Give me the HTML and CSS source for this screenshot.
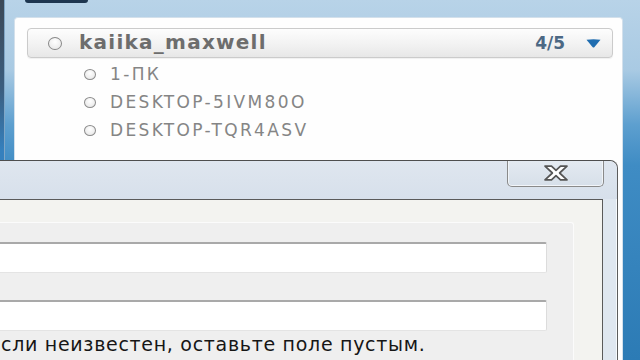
FILE: index.html
```html
<!DOCTYPE html>
<html lang="ru">
<head>
<meta charset="utf-8">
<title>Contacts</title>
<link rel="stylesheet" href="styles.css">
</head>
<body>
<div class="desk">
  <div class="leftstrip"></div>
  <div class="maincol">
    <div class="topbar"><div class="tab"></div></div>
    <div class="panel">
      <div class="group-head">
        <span class="dot big"></span>
        <span class="gname">kaiika_maxwell</span>
        <span class="count">4/5</span>
        <svg class="tri" width="15" height="9" viewBox="0 0 15 9"><path d="M0.5 0.8 Q7.5 -0.4 14.5 0.8 L8.3 8.2 Q7.5 9 6.7 8.2 Z" fill="#1f6db0"/></svg>
      </div>
      <ul class="items">
        <li><span class="dot"></span><span class="iname">1-ПК</span></li>
        <li><span class="dot"></span><span class="iname">DESKTOP-5IVM80O</span></li>
        <li><span class="dot"></span><span class="iname">DESKTOP-TQR4ASV</span></li>
      </ul>
    </div>
  </div>
</div>

<div class="dialog">
  <div class="titlebar">
    <button class="close" aria-label="Закрыть">
      <svg width="28" height="16" viewBox="0 0 28 16">
        <path d="M3 1.2 H9.5 L14 5.4 L18.5 1.2 H25 L17.6 8 L25 14.8 H18.5 L14 10.6 L9.5 14.8 H3 L10.4 8 Z" fill="#ffffff" stroke="#555555" stroke-width="1.7" stroke-linejoin="round"/>
      </svg>
    </button>
  </div>
  <div class="dbody">
    <div class="client">
      <div class="gbox">
        <div class="field"></div>
        <div class="field second"></div>
        <p class="hint">сли неизвестен, оставьте поле пустым.</p>
      </div>
    </div>
  </div>
</div>
</body>
</html>
```

FILE: styles.css
```css
* { box-sizing: border-box; }
html, body {
  margin: 0;
  padding: 0;
}
body {
  width: 640px;
  height: 360px;
  overflow: hidden;
  position: relative;
  font-family: "DejaVu Sans", Verdana, sans-serif;
  background: linear-gradient(#b8d3e8 0px, #a9cae3 70px, #5d9fcf 125px, #3f8cc4 165px, #2c7bb5 360px);
}
.desk {
  display: flex;
  height: 360px;
}
.leftstrip {
  width: 5px;
  height: 160px;
  background: linear-gradient(#3c4856 0px, #3b5e80 90px, #3580bd 150px);
  border-right: 1px solid #7fa6c6;
}
.maincol {
  flex: 1;
  display: flex;
  flex-direction: column;
}
.topbar {
  height: 17px;
  flex: none;
  padding-left: 20px;
}
.tab {
  width: 63px;
  height: 3px;
  background: #1e3650;
  border-radius: 0 0 4px 4px;
}
.panel {
  margin-left: 9px;
  width: 609px;
  flex: 1;
  background: #fefefe;
  border: 1px solid #d3e0eb;
  border-bottom: none;
  border-radius: 4px 4px 0 0;
  padding: 10px 9px 0 12px;
}
.group-head {
  height: 30px;
  border: 1px solid #cbcbcb;
  border-radius: 4px;
  background: linear-gradient(#fdfdfd, #f1f1f1 60%, #e7e7e7);
  box-shadow: 0 1px 1px rgba(0,0,0,0.06);
  display: flex;
  align-items: center;
  padding: 0 11px 0 20px;
}
.dot {
  display: inline-block;
  width: 12px;
  height: 11px;
  border-radius: 50%;
  border: 1.6px solid #8c8c8c;
  background: radial-gradient(circle at 50% 35%, #ffffff, #e4e4e4);
  flex: none;
}
.dot.big {
  width: 14px;
  height: 13px;
  border-color: #878787;
}
.gname {
  margin-left: 17px;
  font-weight: bold;
  font-size: 20px;
  letter-spacing: 1.25px;
  color: #6d6d6d;
  flex: 1;
  line-height: 1;
  margin-top: -2px;
}
.count {
  font-weight: bold;
  font-size: 17px;
  color: #4c6884;
  line-height: 1;
  margin-right: 21px;
}
.tri { display: block; }
.items {
  list-style: none;
  margin: 2px 0 0 0;
  padding: 0 0 0 57px;
}
.items li {
  height: 28px;
  display: flex;
  align-items: center;
}
.iname {
  margin-left: 14px;
  font-size: 17px;
  letter-spacing: 2.35px;
  color: #858585;
  line-height: 1;
}

/* dialog window */
.dialog {
  position: absolute;
  left: 0;
  top: 160px;
  width: 618px;
  height: 200px;
  overflow: hidden;
  background: #dfe7f0;
  border-top: 1px solid #4e4e4e;
  border-right: 1px solid #5c5c5c;
  border-top-right-radius: 8px;
  box-shadow: inset -1px 1px 0 #f6f9fc;
  display: flex;
  flex-direction: column;
}
.titlebar {
  height: 38px;
  flex: none;
  background: linear-gradient(#dfe6ef, #d7e0eb);
  border-top-right-radius: 8px;
  display: flex;
  justify-content: flex-end;
  align-items: flex-start;
  padding-right: 13px;
}
.close {
  width: 97px;
  height: 26px;
  margin: 0;
  padding: 0;
  border: 1px solid #8a8a8a;
  border-top: none;
  border-radius: 0 0 5px 5px;
  background: linear-gradient(#e4eaf1, #d6dfe9);
  box-shadow: inset 0 -1px 0 #f2f5f9, inset 1px 0 0 #f0f4f8, inset -1px 0 0 #f0f4f8;
  display: flex;
  align-items: center;
  justify-content: center;
}
.close svg { display: block; margin-top: -1px; }
.dbody {
  flex: 1;
  min-height: 0;
  display: flex;
  padding-right: 14px;
}
.client {
  flex: 1;
  background: #f3f3f0;
  border-top: 1px solid #5a5a5a;
  border-right: 1px solid #5a5a5a;
  padding: 22px 28px 0 0;
}
.gbox {
  background: #efefef;
  border-top: 1px solid #fbfbfb;
  border-right: 1px solid #fbfbfb;
  border-top-right-radius: 3px;
  padding: 19px 26px 0 0;
  height: 200px;
}
.field {
  height: 31px;
  background: #ffffff;
  border-top: 2px solid #a9a9a9;
  border-right: 1px solid #dcdcdc;
  border-bottom: 1px solid #e4e4e4;
  border-radius: 0 2px 2px 0;
}
.field.second {
  margin-top: 27px;
}
.hint {
  margin: 3px 0 0 1px;
  font-size: 19px;
  letter-spacing: 0.7px;
  color: #161616;
  line-height: 20px;
  white-space: nowrap;
}
```
